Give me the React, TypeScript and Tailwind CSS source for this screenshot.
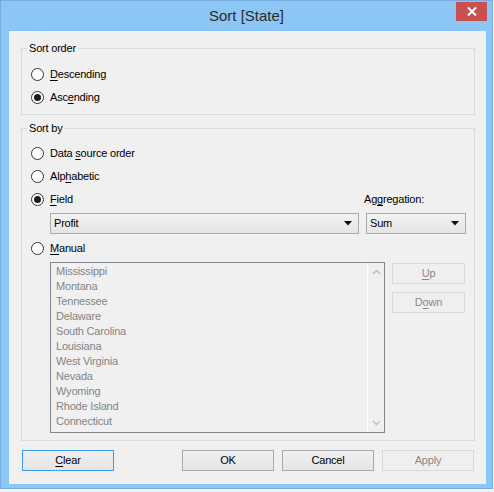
import React from 'react';

const font = { fontFamily: '"Liberation Sans", Arial, sans-serif' };

const states = [
  'Mississippi',
  'Montana',
  'Tennessee',
  'Delaware',
  'South Carolina',
  'Louisiana',
  'West Virginia',
  'Nevada',
  'Wyoming',
  'Rhode Island',
  'Connecticut',
];

// Label with one access-key letter underlined
function Key({ text, at }: { text: string; at: number }) {
  return (
    <span>
      {text.slice(0, at)}
      <span className="underline underline-offset-2">{text[at]}</span>
      {text.slice(at + 1)}
    </span>
  );
}

function Radio({ checked, label, at }: { checked?: boolean; label: string; at: number }) {
  return (
    <div className="flex h-[23px] items-center">
      <div className="flex h-[13px] w-[13px] items-center justify-center rounded-full border border-[#333] bg-white">
        {checked && <div className="h-[7px] w-[7px] rounded-full bg-[#1c1c1c]" />}
      </div>
      <span className="ml-[6px] text-[11px] tracking-[-0.2px] text-black">
        <Key text={label} at={at} />
      </span>
    </div>
  );
}

function Caret() {
  return (
    <svg width="8" height="5" viewBox="0 0 8 5">
      <path d="M0 0h8L4 4.5z" fill="#111" />
    </svg>
  );
}

function Combo({ value, className }: { value: string; className: string }) {
  return (
    <div
      className={`flex h-[21px] items-center justify-between border border-[#acacac] bg-gradient-to-b from-[#f2f2f2] to-[#e5e5e5] pl-[3px] pr-[6px] text-[11px] tracking-[-0.2px] text-black ${className}`}
    >
      <span>{value}</span>
      <Caret />
    </div>
  );
}

function Group({ title, className, children }: { title: string; className: string; children: React.ReactNode }) {
  return (
    <div className={`relative ml-[12px] w-[454px] border border-[#dcdcdc] ${className}`}>
      <span className="absolute -top-[8px] left-[5px] bg-[#f0f0f0] px-[2px] text-[11px] leading-[15px] tracking-[-0.2px] text-black">
        {title}
      </span>
      {children}
    </div>
  );
}

function Btn({
  children,
  disabled,
  primary,
  className = '',
}: {
  children: React.ReactNode;
  disabled?: boolean;
  primary?: boolean;
  className?: string;
}) {
  const look = disabled
    ? 'border-[#d9d9d9] bg-[#efefef] text-[#8a8a8a]'
    : primary
    ? 'border-[#3c9cf0] bg-gradient-to-b from-[#f0f0f0] to-[#e5e5e5] text-black'
    : 'border-[#acacac] bg-gradient-to-b from-[#f0f0f0] to-[#e5e5e5] text-black';
  return (
    <div className={`flex h-[21px] items-center justify-center border text-[11px] tracking-[-0.2px] ${look} ${className}`}>
      {children}
    </div>
  );
}

function Chevron({ up }: { up?: boolean }) {
  return (
    <svg width="9" height="6" viewBox="0 0 9 6">
      <path d={up ? 'M1 5L4.5 1.5L8 5' : 'M1 1L4.5 4.5L8 1'} fill="none" stroke="#c4c4c4" strokeWidth="1.6" />
    </svg>
  );
}

export default function App() {
  return (
    <div className="h-[492px] w-[494px] bg-[#f2f2f2]" style={font}>
      <div className="h-[489px] w-[493px] border border-[#76acdf] bg-[#8cc6f5]">
        {/* Title bar */}
        <div className="relative h-[30px]">
          <div className="pt-[5px] text-center text-[15px] leading-[20px] text-[#2b2b2b]">Sort [State]</div>
          <div className="absolute right-[5px] top-[1px] flex h-[19px] w-[31px] items-center justify-center bg-[#c75050]">
            <svg width="10" height="9" viewBox="0 0 10 9">
              <path d="M1 0.5L9 8.5M9 0.5L1 8.5" stroke="#fff" strokeWidth="2" />
            </svg>
          </div>
        </div>

        {/* Client area */}
        <div className="ml-[8px] h-[453px] w-[477px] bg-[#f0f0f0] pt-[17px]">
          <Group title="Sort order" className="h-[67px] pl-[9px] pt-[14px]">
            <Radio label="Descending" at={0} />
            <Radio label="Ascending" at={3} checked />
          </Group>

          <Group title="Sort by" className="mt-[13px] h-[313px] pl-[9px] pt-[13px]">
            <Radio label="Data source order" at={5} />
            <Radio label="Alphabetic" at={3} />
            <div className="flex items-center justify-between pr-[10px]">
              <Radio label="Field" at={0} checked />
              <span className="w-[100px] text-[11px] tracking-[-0.2px] text-black">
                <Key text="Aggregation:" at={2} />
              </span>
            </div>
            <div className="ml-[19px] mt-[2px] flex gap-[7px]">
              <Combo value="Profit" className="w-[309px]" />
              <Combo value="Sum" className="w-[100px]" />
            </div>
            <div className="mt-[3px]">
              <Radio label="Manual" at={0} />
            </div>
            <div className="ml-[19px] mt-[2px] flex gap-[7px]">
              <div className="flex h-[171px] w-[335px] border border-[#828790] bg-[#f0f0f0]">
                <div className="flex-1 pl-[5px] pt-[1px] text-[11px] leading-[15px] tracking-[-0.2px] text-[#858585]">
                  {states.map((s) => (
                    <div key={s}>{s}</div>
                  ))}
                </div>
                <div className="flex w-[17px] flex-col items-center justify-between border-l border-white py-[6px]">
                  <Chevron up />
                  <Chevron />
                </div>
              </div>
              <div className="flex flex-col gap-[8px] pt-[1px]">
                <Btn disabled className="w-[73px]">
                  <Key text="Up" at={0} />
                </Btn>
                <Btn disabled className="w-[73px]">
                  <Key text="Down" at={1} />
                </Btn>
              </div>
            </div>
          </Group>

          {/* Buttons */}
          <div className="ml-[13px] mt-[9px] flex">
            <Btn primary className="w-[92px]">
              <Key text="Clear" at={0} />
            </Btn>
            <div className="ml-[68px] flex gap-[8px]">
              <Btn className="w-[92px]">OK</Btn>
              <Btn className="w-[92px]">Cancel</Btn>
              <Btn disabled className="w-[92px]">
                Apply
              </Btn>
            </div>
          </div>
        </div>
      </div>
    </div>
  );
}
